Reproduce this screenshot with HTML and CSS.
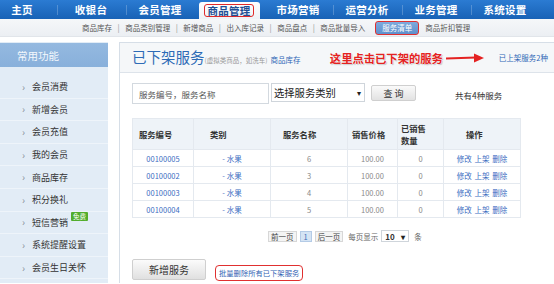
FILE: index.html
```html
<!DOCTYPE html>
<html lang="zh-CN">
<head>
<meta charset="utf-8">
<title>已下架服务</title>
<link rel="stylesheet" href="styles.css">
</head>
<body>
<header class="topnav">
  <a class="nav-item first">主页</a>
  <a class="nav-item">收银台</a>
  <a class="nav-item">会员管理</a>
  <a class="nav-item active"><span class="hl">商品管理</span></a>
  <a class="nav-item">市场营销</a>
  <a class="nav-item">运营分析</a>
  <a class="nav-item">业务管理</a>
  <a class="nav-item">系统设置</a>
</header>
<nav class="subnav">
  <a>商品库存</a><span class="sep">|</span>
  <a>商品类别管理</a><span class="sep">|</span>
  <a>新增商品</a><span class="sep">|</span>
  <a>出入库记录</a><span class="sep">|</span>
  <a>商品盘点</a><span class="sep">|</span>
  <a>商品批量导入</a>
  <a class="sub-active">服务清单</a>
  <a>商品折扣管理</a>
</nav>
<div class="layout">
  <aside class="sidebar">
    <div class="side-head">常用功能</div>
    <ul class="side-list">
      <li><span class="chev">›</span>会员消费</li>
      <li><span class="chev">›</span>新增会员</li>
      <li><span class="chev">›</span>会员充值</li>
      <li><span class="chev">›</span>我的会员</li>
      <li><span class="chev">›</span>商品库存</li>
      <li><span class="chev">›</span>积分换礼</li>
      <li><span class="chev">›</span>短信营销<span class="badge">免费</span></li>
      <li><span class="chev">›</span>系统提醒设置</li>
      <li><span class="chev">›</span>会员生日关怀</li>
    </ul>
  </aside>
  <main class="panel">
    <div class="panel-head">
      <h1 class="title">已下架服务</h1>
      <span class="subtitle">(虚拟类商品，如洗车)</span>
      <a class="link small">商品库存</a>
      <span class="note">这里点击已下架的服务
        <svg class="arrow" width="38" height="10" viewBox="0 0 38 10"><path d="M0 5.5 L30 4.5" stroke="#e42222" stroke-width="2.2" fill="none"/><path d="M28 0.5 L38 5 L28 9.5 Z" fill="#e42222"/></svg>
      </span>
      <a class="link small on-sale">已上架服务2种</a>
    </div>
    <div class="search">
      <div class="input">服务编号，服务名称</div>
      <div class="select">选择服务类别<span class="caret">▾</span></div>
      <button class="btn-query">查 询</button>
      <span class="count">共有4种服务</span>
    </div>
    <table class="grid">
      <colgroup>
        <col class="c61"><col class="c77"><col class="c77"><col class="c50"><col class="c46"><col class="c77">
      </colgroup>
      <thead>
        <tr>
          <th class="h1">服务编号</th>
          <th class="h2">类别</th>
          <th class="h3">服务名称</th>
          <th class="h4">销售价格</th>
          <th class="h5">已销售<br>数量</th>
          <th class="h6">操作</th>
        </tr>
      </thead>
      <tbody>
        <tr><td class="lk">00100005</td><td class="lk">- 水果</td><td class="gr">6</td><td class="gr">100.00</td><td class="gr">0</td><td class="lk ops">修改 上架 删除</td></tr>
        <tr><td class="lk">00100002</td><td class="lk">- 水果</td><td class="gr">3</td><td class="gr">100.00</td><td class="gr">0</td><td class="lk ops">修改 上架 删除</td></tr>
        <tr><td class="lk">00100003</td><td class="lk">- 水果</td><td class="gr">4</td><td class="gr">100.00</td><td class="gr">0</td><td class="lk ops">修改 上架 删除</td></tr>
        <tr><td class="lk">00100004</td><td class="lk">- 水果</td><td class="gr">5</td><td class="gr">100.00</td><td class="gr">0</td><td class="lk ops">修改 上架 删除</td></tr>
      </tbody>
    </table>
    <div class="pager">
      <span class="pbtn">前一页</span>
      <span class="pbtn cur">1</span>
      <span class="pbtn">后一页</span>
      <span class="plabel">每页显示</span>
      <span class="psel">10<span class="caret">▾</span></span>
      <span class="plabel">条</span>
    </div>
    <div class="actions">
      <button class="btn-add">新增服务</button>
      <a class="bulk">批量删除所有已下架服务</a>
    </div>
  </main>
</div>
</body>
</html>
```
FILE: styles.css
```css
* { box-sizing: border-box; }
html, body { margin: 0; padding: 0; }
body {
  width: 554px;
  height: 284px;
  overflow: hidden;
  background: #fff;
  font-family: "Noto Sans CJK SC", "Noto Sans", sans-serif;
  color: #333;
}
a { text-decoration: none; }

/* top navigation */
.topnav {
  display: flex;
  height: 19px;
  background: linear-gradient(#2b7bd2, #1862b6);
  overflow: hidden;
}
.nav-item {
  position: relative;
  flex: 0 0 69px;
  display: flex;
  align-items: center;
  justify-content: center;
  color: #fff;
  font-size: 10.5px;
  font-weight: bold;
  letter-spacing: 0.3px;
}
.nav-item.first { margin-left: -12.5px; }
.nav-item + .nav-item::before {
  content: "";
  position: absolute;
  left: 0;
  top: 5px;
  height: 10px;
  border-left: 1px solid rgba(255,255,255,0.22);
}
.nav-item.active {
  flex-basis: 61px;
  margin: 2px 4px 0;
  border-radius: 3px 3px 0 0;
  background: linear-gradient(#ffffff, #eef2f6);
  color: #1d4f95;
}
.nav-item.active::before, .nav-item.active + .nav-item::before { display: none; }
.hl {
  border: 1.5px solid #e02a2a;
  border-radius: 3px;
  padding: 0 2px;
  line-height: 11px;
  margin-top: -1px;
}

/* sub navigation */
.subnav {
  display: flex;
  align-items: center;
  height: 18px;
  padding-left: 82px;
  background: linear-gradient(#f5f7f9, #eceff3);
  border-bottom: 1px solid #e1e5ea;
  font-size: 7.5px;
  color: #555;
}
.subnav .sep { color: #999; margin: 0 5.5px; font-size: 8px; }
.sub-active {
  margin: 0 6px 0 10px;
  padding: 1px 6px;
  height: 14px;
  display: flex;
  align-items: center;
  color: #fff;
  background: linear-gradient(#7eaadd, #5f90cc);
  border: 1.5px solid #e03030;
  border-radius: 3px;
}

/* layout */
.layout {
  display: grid;
  grid-template-columns: 108px 1fr;
  column-gap: 11px;
  margin-top: 5px;
  height: 241px;
  overflow: hidden;
}

/* sidebar */
.sidebar {
  background: #e2ecf6;
  height: 241px;
}
.side-head {
  height: 24px;
  padding-left: 17px;
  display: flex;
  align-items: center;
  background: linear-gradient(#94b9e0, #88b0db);
  color: #f4f8fc;
  font-size: 10.5px;
  margin-top: 1px;
}
.side-list { list-style: none; margin: 9px 0 0; padding: 0; }
.side-list li {
  position: relative;
  height: 22.6px;
  display: flex;
  align-items: center;
  padding-left: 22px;
  font-size: 9px;
  color: #333;
  border-bottom: 1px solid #eef4fa;
}
.chev { color: #8a9099; font-size: 10px; width: 10px; margin-top: -1px; }
.badge {
  position: relative;
  top: -6px;
  margin-left: 3px;
  background: #52ad2c;
  color: #fff;
  font-size: 6.5px;
  padding: 0 2px;
  line-height: 9px;
  border-radius: 1px;
}

/* panel */
.panel {
  border: 1px solid #d6dee7;
  border-right: none;
  border-bottom: none;
  height: 241px;
  overflow: hidden;
  padding: 0 0 0 12px;
}
.panel-head {
  display: flex;
  align-items: center;
  height: 30px;
  margin-left: -12px;
  padding: 0 6px 0 12px;
  background: #f5f7f9;
  border-bottom: 1px solid #dde3ea;
}
.title {
  margin: 0;
  font-size: 14.5px;
  font-weight: normal;
  color: #2d6bb6;
  line-height: 1;
}
.subtitle { font-size: 6.5px; color: #999; margin-top: 4px; }
.link { color: #2f66b6; }
.small { font-size: 7.5px; margin-left: 3px; margin-top: 3px; }
.note {
  margin-left: auto;
  display: flex;
  align-items: center;
  gap: 3px;
  color: #e42222;
  font-size: 11.3px;
  font-weight: bold;
  text-shadow: 0 0 2px #fff, 0 0 1px #fff, 1px 1px 1px rgba(0,0,0,0.25);
}
.arrow { margin-top: 1px; }
.on-sale { margin-left: 15px; margin-top: 0; }

/* search */
.search {
  display: flex;
  align-items: center;
  margin-top: 9px;
  height: 23px;
}
.input {
  width: 137px;
  height: 21px;
  border: 1px solid #d3d9df;
  padding-left: 6px;
  font-size: 8.5px;
  color: #555;
  display: flex;
  align-items: center;
}
.select {
  position: relative;
  width: 94px;
  height: 19px;
  margin: -3px 0 0 2px;
  border: 1px solid #cfd5db;
  padding-left: 2px;
  font-size: 10.3px;
  color: #222;
  display: flex;
  align-items: center;
}
.select .caret, .psel .caret {
  position: absolute;
  right: 3px;
  font-size: 8px;
  color: #222;
}
.btn-query {
  margin: -1px 0 0 6px;
  width: 45px;
  height: 16px;
  border: 1px solid #cfcfcf;
  border-radius: 2px;
  background: linear-gradient(#fafafa, #e2e2e2);
  font-family: inherit;
  font-size: 9px;
  color: #333;
  padding: 0;
}
.count { margin-left: 39px; font-size: 8.5px; color: #333; margin-top: 2px; }

/* table */
.grid {
  margin-top: 13px;
  border-collapse: collapse;
  table-layout: fixed;
  width: 388px;
  font-size: 7.5px;
}
.c61 { width: 61px; }
.c77 { width: 77px; }
.c50 { width: 50px; }
.c46 { width: 46px; }
.grid th, .grid td { border: 1px solid #e4e9ef; padding: 0; }
.grid th {
  height: 31px;
  background: #eef3f8;
  text-align: left;
  font-size: 8.3px;
  color: #333;
  line-height: 12px;
}
.grid th.h1 { padding-left: 6px; }
.grid th.h2 { padding-left: 16px; }
.grid th.h3 { padding-left: 12px; }
.grid th.h4 { padding-left: 4px; }
.grid th.h5 { padding-left: 3px; }
.grid th.h6 { padding-left: 22px; }
.grid td { height: 17px; text-align: center; }
.lk { color: #3a6cbf; }
.gr { color: #888; }
.ops { word-spacing: 1px; }

/* pager */
.pager {
  display: flex;
  align-items: center;
  gap: 3px;
  margin-top: 12px;
  padding-left: 136px;
  font-size: 7.5px;
}
.pbtn {
  height: 11px;
  padding: 0 2px;
  border: 1px solid #d7d7d7;
  background: #f4f4f4;
  color: #444;
  display: flex;
  align-items: center;
}
.pbtn.cur { background: #d5e4f4; border-color: #b4cbe6; color: #3b6cb5; padding: 0 3px; }
.plabel { color: #666; margin-left: 2px; }
.psel {
  position: relative;
  width: 28px;
  height: 12px;
  border: 1px solid #cfd5db;
  padding-left: 3px;
  font-weight: bold;
  font-size: 8px;
  display: flex;
  align-items: center;
}

/* bottom actions */
.actions {
  display: flex;
  align-items: flex-end;
  gap: 9px;
  margin-top: 17px;
}
.btn-add {
  width: 74px;
  height: 21px;
  border: 1px solid #cfcfcf;
  border-radius: 2px;
  background: linear-gradient(#fbfbfb, #e0e0e0);
  font-family: inherit;
  font-size: 10px;
  color: #333;
  padding: 0;
}
.bulk {
  height: 16px;
  padding: 0 3px;
  border: 1.5px solid #e03030;
  border-radius: 4px;
  color: #2f62b3;
  font-size: 7.3px;
  display: flex;
  align-items: center;
  margin-bottom: -1px;
}
```
